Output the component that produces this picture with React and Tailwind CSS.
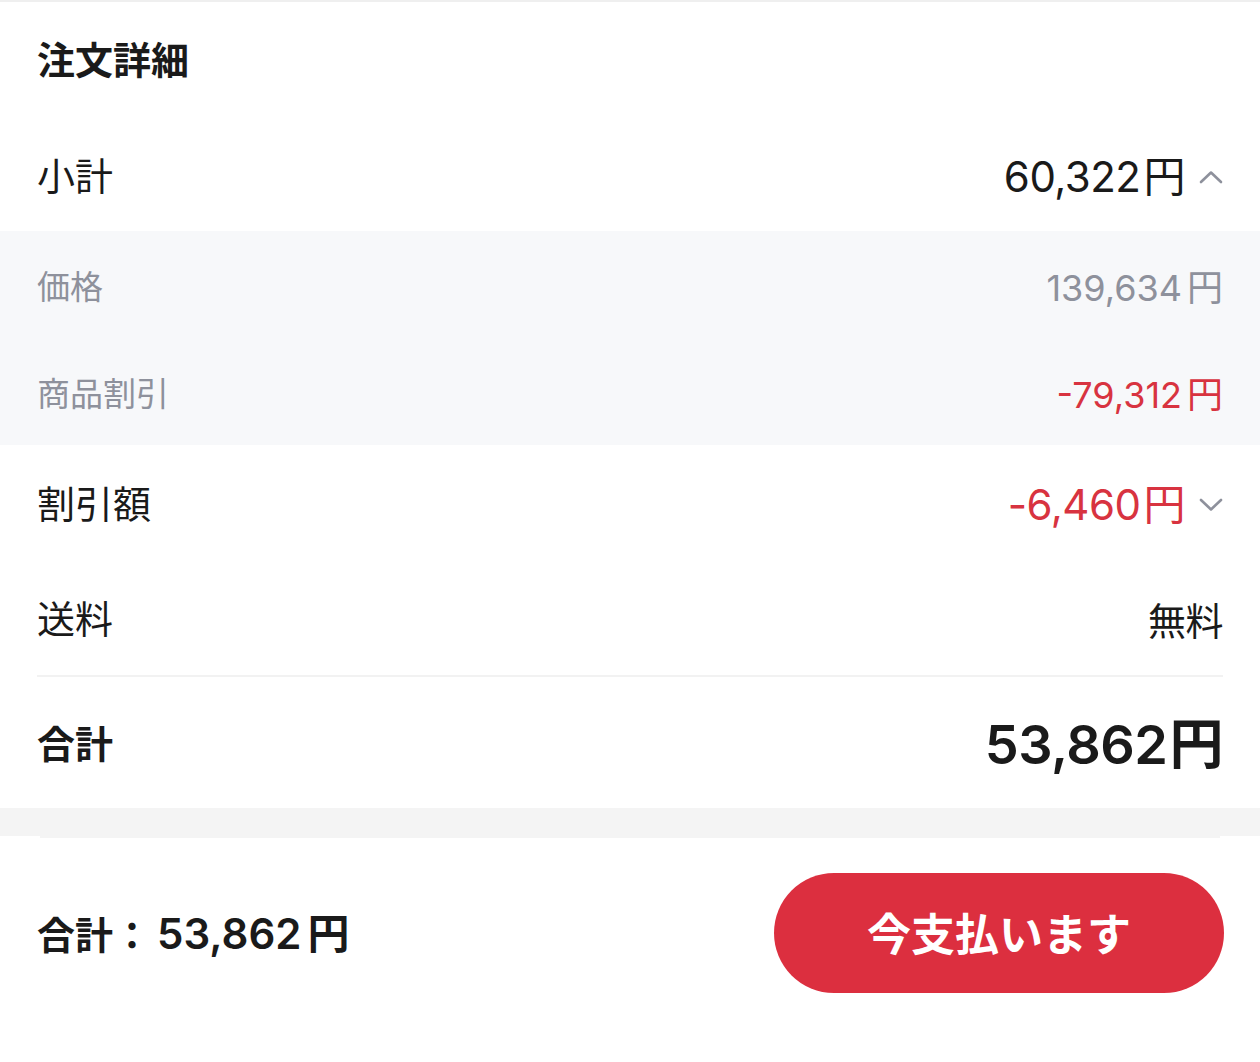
import React from 'react';

const cjk = { fontFamily: 'Inter, "Noto Sans CJK JP", sans-serif' };

function Chevron({ up }) {
    return (
        <svg width="24" height="14" viewBox="0 0 24 14" fill="none" className="ml-[14px]">
            <path
                d={up ? "M2 12 L12 2.5 L22 12" : "M2 2 L12 11.5 L22 2"}
                stroke="#8e919c"
                strokeWidth="2.6"
                strokeLinecap="round"
                strokeLinejoin="round"
            />
        </svg>
    );
}

// Monto con el "円" un poco separado
function Yen({ n, gap = "ml-[3px]" }) {
    return (
        <>
            {n}<span className={gap}>円</span>
        </>
    );
}

function Row({ label, value, valueClass = "text-[#1a1a1a]", chevron, h = "h-[115px]" }) {
    return (
        <div className={`flex items-center justify-between px-[37px] pt-[4px] ${h}`}>
            <span className="text-[38px] text-[#1a1a1a]">{label}</span>
            <div className="flex items-center">
                <span className={`text-[42px] tracking-[-0.5px] ${valueClass}`}>{value}</span>
                {chevron === 'up' && <Chevron up />}
                {chevron === 'down' && <Chevron />}
            </div>
        </div>
    );
}

function SubRow({ label, value, valueClass }) {
    return (
        <div className="flex items-center justify-between px-[37px] pt-[6px] h-[107px]">
            <span className="text-[33px] text-[#8e919c]">{label}</span>
            <span className={`text-[36px] ${valueClass}`}>{value}</span>
        </div>
    );
}

export default function App() {
    return (
        <div className="w-[1260px] h-[1062px] bg-white overflow-hidden" style={cjk}>
            <div className="h-[2px] bg-[#efefef]"></div>

            {/* --- ENCABEZADO --- */}
            <div className="h-[116px] flex items-center px-[37px]">
                <h1 className="text-[38px] font-bold text-[#1a1a1a]">注文詳細</h1>
            </div>

            <Row label="小計" value={<Yen n="60,322" />} chevron="up" h="h-[113px]" />

            {/* --- DESGLOSE --- */}
            <div className="bg-[#f7f8fa]">
                <SubRow label="価格" value={<Yen n="139,634" gap="ml-[5px]" />} valueClass="text-[#8e919c]" />
                <SubRow label="商品割引" value={<Yen n="-79,312" gap="ml-[5px]" />} valueClass="text-[#d83340]" />
            </div>

            <Row label="割引額" value={<Yen n="-6,460" />} valueClass="text-[#d83340]" chevron="down" />
            <Row label="送料" value={<span className="text-[38px]">無料</span>} />

            <div className="mx-[37px] h-[2px] bg-[#f2f2f2]"></div>

            <div className="h-[131px] flex items-center justify-between px-[37px] pt-[4px]">
                <span className="text-[38px] font-bold text-[#1a1a1a]">合計</span>
                <span className="text-[54px] font-semibold tracking-[-0.5px] text-[#1a1a1a]">
                    <Yen n="53,862" gap="ml-[2px]" />
                </span>
            </div>

            <div className="h-[28px] bg-[#f4f4f4]"></div>
            <div className="mx-[40px] h-[2px] bg-[#f4f4f4]"></div>

            {/* --- PIE --- */}
            <div className="flex items-center justify-between pl-[37px] pr-[36px] pt-[35px]">
                <span className="text-[38px] font-bold text-[#1a1a1a]">
                    合計：<span className="text-[42px] font-semibold ml-[6px]"><Yen n="53,862" gap="ml-[6px]" /></span>
                </span>
                <button className="w-[450px] h-[120px] rounded-full bg-[#dc2f3f] text-white text-[44px] font-bold pt-[3px]">
                    今支払います
                </button>
            </div>
        </div>
    );
}
